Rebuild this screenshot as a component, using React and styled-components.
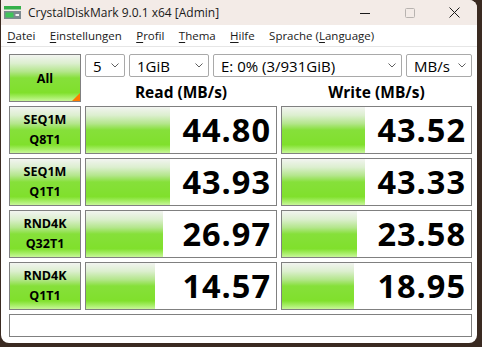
import React from 'react';
import styled, { createGlobalStyle } from 'styled-components';

const GlobalStyle = createGlobalStyle`
  html, body {
    margin: 0;
    padding: 0;
    background: #3a2a21;
    font-family: "Open Sans", "Liberation Sans", sans-serif;
  }
`

const tests = [
  { top: 'SEQ1M', bottom: 'Q8T1', read: 44.80, write: 43.52 },
  { top: 'SEQ1M', bottom: 'Q1T1', read: 43.93, write: 43.33 },
  { top: 'RND4K', bottom: 'Q32T1', read: 26.97, write: 23.58 },
  { top: 'RND4K', bottom: 'Q1T1', read: 14.57, write: 18.95 },
]

const menu = [
  { key: 'D', rest: 'atei' },
  { key: 'E', rest: 'instellungen' },
  { key: 'P', rest: 'rofil' },
  { key: 'T', rest: 'hema' },
  { key: 'H', rest: 'ilfe' },
  { pre: 'Sprache (', key: 'L', rest: 'anguage)' },
]

// CrystalDiskMark meter: log scale over 6 decades
const meter = (value) => Math.max(0, Math.min(1, Math.log10(value * 10) / 6))

const AppIcon = () => (
  <svg width="17" height="13" viewBox="0 0 17 13">
    <rect x="0" y="0" width="17" height="3.5" fill="#35b04a" />
    <rect x="0" y="5" width="17" height="8" fill="#7d8a90" />
    <rect x="1.5" y="6.5" width="8" height="5" fill="#3fc45a" />
    <rect x="11.5" y="8" width="3.5" height="2" fill="#f2f2f2" />
  </svg>
)

const Chevron = () => (
  <svg width="8" height="5" viewBox="0 0 8 5">
    <path d="M0.5 0.5 L4 4 L7.5 0.5" fill="none" stroke="#5f5f5f" strokeWidth="1" />
  </svg>
)

const Dropdown = ({ width, children }) => (
  <Select $width={width}>
    <span>{children}</span>
    <Chevron />
  </Select>
)

const App = () => {
  return (
    <>
      <GlobalStyle />
      <Window>
        <TitleBar>
          <AppIcon />
          <TitleText>CrystalDiskMark 9.0.1 x64 [Admin]</TitleText>
          <Controls>
            <CtrlButton>
              <svg width="10" height="10" viewBox="0 0 10 10">
                <path d="M0 5.5 H10" stroke="#1a1a1a" strokeWidth="1" />
              </svg>
            </CtrlButton>
            <CtrlButton>
              <svg width="10" height="10" viewBox="0 0 10 10">
                <rect x="0.5" y="0.5" width="9" height="9" rx="1" fill="none" stroke="#b8b3b0" strokeWidth="1" />
              </svg>
            </CtrlButton>
            <CtrlButton>
              <svg width="11" height="11" viewBox="0 0 11 11">
                <path d="M0.5 0.5 L10.5 10.5 M10.5 0.5 L0.5 10.5" stroke="#1a1a1a" strokeWidth="1" />
              </svg>
            </CtrlButton>
          </Controls>
        </TitleBar>

        <MenuBar>
          {menu.map((m) => (
            <MenuItem key={m.key}>
              {m.pre}<u>{m.key}</u>{m.rest}
            </MenuItem>
          ))}
        </MenuBar>

        <Body>
          <Grid>
            <AllButton>All</AllButton>
            <SelectRow>
              <Dropdown width={40}>5</Dropdown>
              <Dropdown width={80}>1GiB</Dropdown>
              <Dropdown width={189}>E: 0% (3/931GiB)</Dropdown>
              <Dropdown width={66}>MB/s</Dropdown>
            </SelectRow>
            <Header>Read (MB/s)</Header>
            <Header>Write (MB/s)</Header>

            {tests.map((t) => (
              <React.Fragment key={t.top + t.bottom}>
                <TestButton>
                  <span>{t.top}</span>
                  <span>{t.bottom}</span>
                </TestButton>
                <Result>
                  <Bar style={{ width: `${meter(t.read) * 100}%` }} />
                  <Value>{t.read.toFixed(2)}</Value>
                </Result>
                <Result>
                  <Bar style={{ width: `${meter(t.write) * 100}%` }} />
                  <Value>{t.write.toFixed(2)}</Value>
                </Result>
              </React.Fragment>
            ))}

            <Comment />
          </Grid>
        </Body>
      </Window>
    </>
  )
}

export default App

const Window = styled.div`
  width: 476px;
  height: 343px;
  margin-left: 1px;
  background: #ffffff;
  border-radius: 0 8px 8px 8px;
  overflow: hidden;
  display: flex;
  flex-direction: column;
`

const TitleBar = styled.div`
  height: 25px;
  background: #f3ebe7;
  display: flex;
  align-items: center;
  padding-left: 3px;
`

const TitleText = styled.div`
  margin-left: 7px;
  font-size: 12px;
  color: #1a1a1a;
  flex: 1;
`

const Controls = styled.div`
  display: flex;
  align-self: stretch;
`

const CtrlButton = styled.div`
  width: 45px;
  display: flex;
  align-items: center;
  justify-content: center;
`

const MenuBar = styled.div`
  height: 21px;
  border-bottom: 1px solid #e6e6e6;
  display: flex;
  align-items: center;
  margin-left: -1px;
`

const MenuItem = styled.div`
  padding: 0 7.2px;
  font-size: 11.5px;
  color: #1a1a1a;

  u {
    text-underline-offset: 2px;
  }
`

const Body = styled.div`
  padding: 7px 5px 0 8px;
`

const Grid = styled.div`
  display: grid;
  grid-template-columns: 72px 192px 191px;
  grid-template-rows: 23px 21px repeat(4, 48px) 23px;
  gap: 4px;
`

const greenFace = `
  linear-gradient(
    to bottom,
    #f2f4f0 0%,
    #dcefcf 18%,
    #b4e68c 36%,
    #86e03a 50%,
    #80e02c 82%,
    #a6ee66 92%,
    #c8f69a 100%
  )
`

const AllButton = styled.div`
  grid-row: 1 / span 2;
  position: relative;
  border: 1px solid #808080;
  background: ${greenFace};
  display: flex;
  align-items: center;
  justify-content: center;
  font-weight: 700;
  font-size: 12.5px;
  color: #000;

  &::after {
    content: '';
    position: absolute;
    right: 0;
    bottom: 0;
    border-style: solid;
    border-width: 0 0 8px 8px;
    border-color: transparent transparent #ff7a00 transparent;
  }
`

const SelectRow = styled.div`
  grid-column: 2 / span 2;
  display: flex;
  justify-content: space-between;
`

const Select = styled.div`
  width: ${(p) => p.$width}px;
  box-sizing: border-box;
  border: 1px solid #a9a9a9;
  border-radius: 2px;
  background: #fff;
  display: flex;
  align-items: center;
  justify-content: space-between;
  padding: 0 5px 0 7px;
  font-size: 15px;
  color: #000;
  white-space: nowrap;
`

const Header = styled.div`
  display: flex;
  align-items: center;
  justify-content: center;
  font-weight: 700;
  font-size: 15.5px;
  color: #000;
`

const TestButton = styled.div`
  border: 1px solid #808080;
  background: ${greenFace};
  display: flex;
  flex-direction: column;
  align-items: center;
  justify-content: center;
  gap: 4px;
  font-weight: 700;
  font-size: 12.5px;
  line-height: 16px;
  color: #000;
`

const Result = styled.div`
  position: relative;
  border: 1px solid #808080;
  background: #fff;
  display: flex;
  align-items: center;
  justify-content: flex-end;
  padding-right: 5px;
`

const Bar = styled.div`
  position: absolute;
  left: 0;
  top: 0;
  bottom: 0;
  background: ${greenFace};
`

const Value = styled.div`
  position: relative;
  font-weight: 700;
  font-size: 32.5px;
  letter-spacing: 1px;
  line-height: 1;
  color: #000;
`

const Comment = styled.div`
  grid-column: 1 / span 3;
  border: 1px solid #808080;
  background: #fff;
`
